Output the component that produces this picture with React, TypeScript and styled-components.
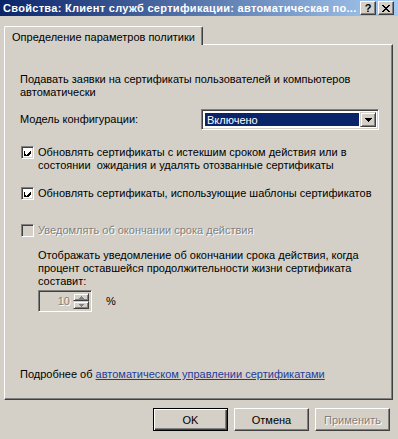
import React from 'react';
import styled, { createGlobalStyle } from 'styled-components';

const GlobalStyle = createGlobalStyle`
  html, body { margin: 0; padding: 0; background: #D4D0C8; }
  #root { width: 398px; height: 439px; }
`;

const FONT = `"Liberation Sans", Arial, sans-serif`;

const Window = styled.div`
  width: 398px;
  height: 439px;
  background: #D4D0C8;
  display: flex;
  flex-direction: column;
  overflow: hidden;
  font-family: ${FONT};
  font-size: 11px;
  color: #000;
`;

const TitleBar = styled.div`
  height: 16px;
  flex: none;
  display: flex;
  align-items: center;
  justify-content: space-between;
  padding: 0 4px 0 3px;
  background: linear-gradient(to right, #0A246A, #A6CAF0);
`;

const Title = styled.span`
  color: #fff;
  font-weight: bold;
  letter-spacing: 0.3px;
  white-space: nowrap;
  overflow: hidden;
`;

const CaptionButtons = styled.div`
  display: flex;
  gap: 2px;
  flex: none;
`;

const CaptionButton = styled.div`
  width: 16px;
  height: 14px;
  box-sizing: border-box;
  background: #D4D0C8;
  border: 1px solid;
  border-color: #fff #404040 #404040 #fff;
  box-shadow: inset -1px -1px #808080;
  display: flex;
  align-items: center;
  justify-content: center;
  font-weight: bold;
  font-size: 11px;
  line-height: 1;
`;

const Body = styled.div`
  flex: 1;
  display: flex;
  flex-direction: column;
  padding: 10px 5px 0 4px;
`;

const TabStrip = styled.div`
  display: flex;
  height: 18px;
  position: relative;
  z-index: 1;
`;

const Tab = styled.div`
  height: 19px;
  width: 199px;
  box-sizing: border-box;
  padding: 4px 0 0 7px;
  background: #D4D0C8;
  border-left: 1px solid #fff;
  border-top: 1px solid #fff;
  border-right: 1px solid #404040;
  border-top-left-radius: 2px;
  border-top-right-radius: 2px;
  box-shadow: inset -1px 0 #808080;
  white-space: nowrap;
`;

const Panel = styled.div`
  height: 356px;
  box-sizing: border-box;
  border: 1px solid;
  border-color: #fff #404040 #404040 #fff;
  box-shadow: inset -1px -1px #808080;
  padding: 28px 10px 0 15px;
  display: flex;
  flex-direction: column;
`;

const Text = styled.div<{ $mt?: number; $indent?: number }>`
  line-height: 13px;
  margin-top: ${p => p.$mt ?? 0}px;
  padding-left: ${p => p.$indent ?? 0}px;
`;

const Row = styled.div<{ $mt?: number }>`
  display: flex;
  align-items: center;
  margin-top: ${p => p.$mt ?? 0}px;
`;

const Label = styled.div`
  width: 181px;
  line-height: 13px;
`;

const Combo = styled.div`
  width: 178px;
  height: 21px;
  box-sizing: border-box;
  border: 1px solid;
  border-color: #808080 #fff #fff #808080;
  box-shadow: inset 1px 1px #404040, inset -1px -1px #D4D0C8;
  background: #fff;
  padding: 2px;
  display: flex;
`;

const ComboValue = styled.div`
  flex: 1;
  margin: 1px;
  background: #0A246A;
  color: #fff;
  line-height: 15px;
  padding-left: 2px;
`;

const ArrowButton = styled.div`
  width: 16px;
  box-sizing: border-box;
  background: #D4D0C8;
  border: 1px solid;
  border-color: #D4D0C8 #404040 #404040 #D4D0C8;
  box-shadow: inset 1px 1px #fff, inset -1px -1px #808080;
  display: flex;
  align-items: center;
  justify-content: center;
`;

const CheckRow = styled.div<{ $mt?: number }>`
  display: flex;
  align-items: flex-start;
  margin-top: ${p => p.$mt ?? 0}px;
  padding-left: 1px;
`;

const CheckBox = styled.div<{ $disabled?: boolean }>`
  width: 13px;
  height: 13px;
  box-sizing: border-box;
  flex: none;
  margin-right: 4px;
  border: 1px solid;
  border-color: #808080 #fff #fff #808080;
  box-shadow: inset 1px 1px #404040, inset -1px -1px #D4D0C8;
  background: ${p => (p.$disabled ? '#D4D0C8' : '#fff')};
  display: flex;
  align-items: center;
  justify-content: center;
`;

const CheckText = styled.div<{ $disabled?: boolean }>`
  line-height: 13px;
  color: ${p => (p.$disabled ? '#808080' : '#000')};
  text-shadow: ${p => (p.$disabled ? '1px 1px 0 #fff' : 'none')};
`;

const SpinRow = styled.div`
  display: flex;
  align-items: center;
  margin-top: 2px;
  padding-left: 18px;
`;

const SpinBox = styled.div`
  width: 54px;
  height: 22px;
  box-sizing: border-box;
  border: 1px solid;
  border-color: #808080 #fff #fff #808080;
  box-shadow: inset 1px 1px #404040, inset -1px -1px #D4D0C8;
  background: #D4D0C8;
  padding: 2px;
  display: flex;
`;

const SpinValue = styled.div`
  flex: 1;
  text-align: right;
  color: #808080;
  text-shadow: 1px 1px 0 #fff;
  line-height: 16px;
  padding-right: 3px;
`;

const SpinButtons = styled.div`
  width: 16px;
  display: flex;
  flex-direction: column;
`;

const SpinButton = styled.div`
  flex: 1;
  box-sizing: border-box;
  border: 1px solid;
  border-color: #D4D0C8 #404040 #404040 #D4D0C8;
  box-shadow: inset 1px 1px #fff, inset -1px -1px #808080;
  display: flex;
  align-items: center;
  justify-content: center;
`;

const Percent = styled.div`
  margin-left: 14px;
`;

const Link = styled.a`
  color: #1F3C99;
  text-decoration: underline;
  cursor: pointer;
`;

const ButtonRow = styled.div`
  display: flex;
  justify-content: flex-end;
  gap: 6px;
  margin-top: 8px;
  padding-right: 3px;
`;

const Button = styled.div<{ $default?: boolean; $disabled?: boolean }>`
  width: 75px;
  height: 23px;
  box-sizing: border-box;
  border: 1px solid;
  border-color: ${p => (p.$default ? '#000' : '#fff #404040 #404040 #fff')};
  box-shadow: ${p =>
    p.$default
      ? 'inset 1px 1px #fff, inset -1px -1px #404040, inset -2px -2px #808080'
      : 'inset -1px -1px #808080'};
  display: flex;
  align-items: center;
  justify-content: center;
  color: ${p => (p.$disabled ? '#808080' : '#000')};
  text-shadow: ${p => (p.$disabled ? '1px 1px 0 #fff' : 'none')};
`;

const Check = () => (
  <svg width="7" height="7" viewBox="0 0 7 7" shapeRendering="crispEdges">
    <path d="M0 2h1v3h1v1h1v-1h1v-1h1v-1h1v-1h1v3h-1v1h-1v1h-1v1h-1v1h-1v-1h-1v-1h-1z" fill="#000" />
  </svg>
);

const DownArrow = () => (
  <svg width="7" height="4" viewBox="0 0 7 4" shapeRendering="crispEdges">
    <path d="M0 0h7v1h-1v1h-1v1h-1v1h-1v-1h-1v-1h-1v-1h-1z" fill="#000" />
  </svg>
);

const SmallArrow = ({ up }: { up?: boolean }) => (
  <svg width="5" height="3" viewBox="0 0 5 3" shapeRendering="crispEdges">
    <path
      d={up ? 'M2 0h1v1h1v1h1v1h-5v-1h1v-1h1z' : 'M0 0h5v1h-1v1h-1v1h-1v-1h-1v-1h-1z'}
      fill="#808080"
    />
  </svg>
);

const CloseGlyph = () => (
  <svg width="8" height="7" viewBox="0 0 8 7" shapeRendering="crispEdges">
    <path
      d="M0 0h2v1h1v1h2v-1h1v-1h2v1h-1v1h-1v1h-1v1h1v1h1v1h1v1h-2v-1h-1v-1h-2v1h-1v1h-2v-1h1v-1h1v-1h1v-1h-1v-1h-1v-1h-1z"
      fill="#000"
    />
  </svg>
);

export default function App() {
  return (
    <>
      <GlobalStyle />
      <Window>
        <TitleBar>
          <Title>Свойства: Клиент служб сертификации: автоматическая по...</Title>
          <CaptionButtons>
            <CaptionButton>?</CaptionButton>
            <CaptionButton>
              <CloseGlyph />
            </CaptionButton>
          </CaptionButtons>
        </TitleBar>
        <Body>
          <TabStrip>
            <Tab>Определение параметров политики</Tab>
          </TabStrip>
          <Panel>
            <Text>
              Подавать заявки на сертификаты пользователей и компьютеров
              <br />
              автоматически
            </Text>
            <Row $mt={10}>
              <Label>Модель конфигурации:</Label>
              <Combo>
                <ComboValue>Включено</ComboValue>
                <ArrowButton>
                  <DownArrow />
                </ArrowButton>
              </Combo>
            </Row>
            <CheckRow $mt={16}>
              <CheckBox>
                <Check />
              </CheckBox>
              <CheckText>
                Обновлять сертификаты с истекшим сроком действия или в
                <br />
                состоянии&nbsp; ожидания и удалять отозванные сертификаты
              </CheckText>
            </CheckRow>
            <CheckRow $mt={15}>
              <CheckBox>
                <Check />
              </CheckBox>
              <CheckText>Обновлять сертификаты, использующие шаблоны сертификатов</CheckText>
            </CheckRow>
            <CheckRow $mt={24}>
              <CheckBox $disabled />
              <CheckText $disabled>Уведомлять об окончании срока действия</CheckText>
            </CheckRow>
            <Text $mt={12} $indent={18}>
              Отображать уведомление об окончании срока действия, когда
              <br />
              процент оставшейся продолжительности жизни сертификата
              <br />
              составит:
            </Text>
            <SpinRow>
              <SpinBox>
                <SpinValue>10</SpinValue>
                <SpinButtons>
                  <SpinButton>
                    <SmallArrow up />
                  </SpinButton>
                  <SpinButton>
                    <SmallArrow />
                  </SpinButton>
                </SpinButtons>
              </SpinBox>
              <Percent>%</Percent>
            </SpinRow>
            <Text $mt={56}>
              Подробнее об <Link>автоматическом управлении сертификатами</Link>
            </Text>
          </Panel>
          <ButtonRow>
            <Button $default>OK</Button>
            <Button>Отмена</Button>
            <Button $disabled>Применить</Button>
          </ButtonRow>
        </Body>
      </Window>
    </>
  );
}
